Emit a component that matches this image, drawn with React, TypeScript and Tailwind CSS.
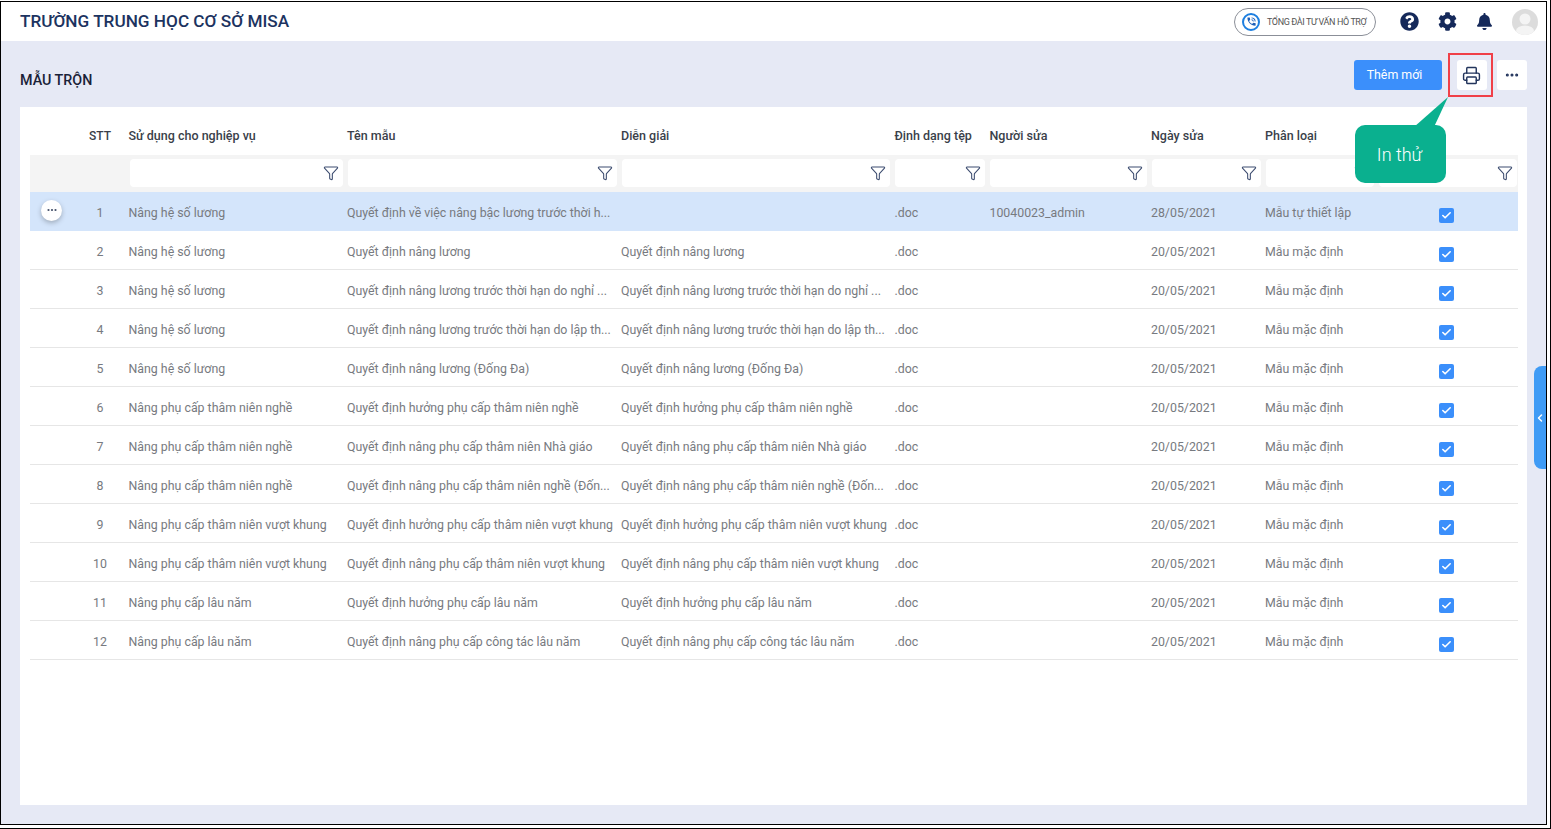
import { Funnel, Printer, Ellipsis, ChevronLeft, Check } from "lucide-react";
import { FaBell, FaCog, FaQuestionCircle } from "react-icons/fa";
import { MdPhoneInTalk } from "react-icons/md";

type Row = {
    stt: number;
    usedFor: string;
    name: string;
    note: string;
    editor?: string;
    date: string;
    kind: string;
};

const L1 = "Nâng hệ số lương";
const L2 = "Nâng phụ cấp thâm niên nghề";
const L3 = "Nâng phụ cấp thâm niên vượt khung";
const L4 = "Nâng phụ cấp lâu năm";
const DATE = "20/05/2021";
const KIND = "Mẫu mặc định";

const rows: Row[] = [
    { stt: 1, usedFor: L1, name: "Quyết định về việc nâng bậc lương trước thời h...", note: "", editor: "10040023_admin", date: "28/05/2021", kind: "Mẫu tự thiết lập" },
    { stt: 2, usedFor: L1, name: "Quyết định nâng lương", note: "Quyết định nâng lương", date: DATE, kind: KIND },
    { stt: 3, usedFor: L1, name: "Quyết định nâng lương trước thời hạn do nghỉ ...", note: "Quyết định nâng lương trước thời hạn do nghỉ ...", date: DATE, kind: KIND },
    { stt: 4, usedFor: L1, name: "Quyết định nâng lương trước thời hạn do lập th...", note: "Quyết định nâng lương trước thời hạn do lập th...", date: DATE, kind: KIND },
    { stt: 5, usedFor: L1, name: "Quyết định nâng lương (Đống Đa)", note: "Quyết định nâng lương (Đống Đa)", date: DATE, kind: KIND },
    { stt: 6, usedFor: L2, name: "Quyết định hưởng phụ cấp thâm niên nghề", note: "Quyết định hưởng phụ cấp thâm niên nghề", date: DATE, kind: KIND },
    { stt: 7, usedFor: L2, name: "Quyết định nâng phụ cấp thâm niên Nhà giáo", note: "Quyết định nâng phụ cấp thâm niên Nhà giáo", date: DATE, kind: KIND },
    { stt: 8, usedFor: L2, name: "Quyết định nâng phụ cấp thâm niên nghề (Đốn...", note: "Quyết định nâng phụ cấp thâm niên nghề (Đốn...", date: DATE, kind: KIND },
    { stt: 9, usedFor: L3, name: "Quyết định hưởng phụ cấp thâm niên vượt khung", note: "Quyết định hưởng phụ cấp thâm niên vượt khung", date: DATE, kind: KIND },
    { stt: 10, usedFor: L3, name: "Quyết định nâng phụ cấp thâm niên vượt khung", note: "Quyết định nâng phụ cấp thâm niên vượt khung", date: DATE, kind: KIND },
    { stt: 11, usedFor: L4, name: "Quyết định hưởng phụ cấp lâu năm", note: "Quyết định hưởng phụ cấp lâu năm", date: DATE, kind: KIND },
    { stt: 12, usedFor: L4, name: "Quyết định nâng phụ cấp công tác lâu năm", note: "Quyết định nâng phụ cấp công tác lâu năm", date: DATE, kind: KIND },
];

const columns = "grid grid-cols-[98.5px_218.5px_274px_273.5px_95px_161.5px_114px_116px_131px]";
const filterWidths = ["w-[213px]", "w-[269px]", "w-[268px]", "w-[90px]", "w-[157px]", "w-[109px]", "w-[108px]", "w-[138px]"];
const cell = "whitespace-nowrap overflow-visible";

const App = () => {
    return (
        <div className="relative box-border flex h-[829px] w-[1551px] flex-col overflow-hidden border-r border-b border-black bg-white pt-px pr-[3px] pb-[3px] font-['Roboto',sans-serif]">
            <div className="flex min-h-0 flex-1 flex-col border border-black">
                {/* top bar */}
                <header className="flex h-[39px] shrink-0 items-center bg-white pl-[19px]">
                    <h1 className="text-[17.2px] font-medium whitespace-nowrap text-[#1c3360]">TRƯỜNG TRUNG HỌC CƠ SỞ MISA</h1>
                    <div className="ml-auto flex h-[28px] w-[142px] items-center rounded-full border border-[#8b8f98] pl-[7px]">
                        <span className="flex h-[18px] w-[18px] items-center justify-center rounded-full border-[2px] border-[#1d7fe0] text-[#1d5fb8]">
                            <MdPhoneInTalk size={11} />
                        </span>
                        <span className="ml-[7px] pt-[2px] text-[9px] tracking-[-0.4px] whitespace-nowrap text-[#555]">TỔNG ĐÀI TƯ VẤN HỖ TRỢ</span>
                    </div>
                    <FaQuestionCircle className="ml-[24px] text-[#15295a]" size={19} />
                    <FaCog className="ml-[19px] text-[#15295a]" size={19} />
                    <FaBell className="ml-[19px] text-[#15295a]" size={17} />
                    <div className="mr-[8px] ml-[19px] flex h-[26px] w-[26px] items-center justify-center overflow-hidden rounded-full bg-[#dcdcdc]">
                        <svg viewBox="0 0 26 26" className="h-[26px] w-[26px]">
                            <circle cx="13" cy="10" r="5.5" fill="#f4f4f4" />
                            <ellipse cx="13" cy="22" rx="9" ry="5.5" fill="#f4f4f4" />
                        </svg>
                    </div>
                </header>

                <main className="flex min-h-0 flex-1 flex-col bg-[#e6e9f5] px-[19px] pb-[19px]">
                    {/* page title and actions */}
                    <div className="flex h-[66px] shrink-0 items-start pt-[19px]">
                        <h2 className="mt-[10px] text-[14.3px] font-medium text-[#1a2238]">MẪU TRỘN</h2>
                        <button className="ml-auto h-[30px] w-[88px] rounded-[3px] bg-[#3b8ffb] pr-[7px] text-[12.4px] text-white">Thêm mới</button>
                        <button className="ml-[15px] flex h-[30px] w-[30px] items-center justify-center rounded-[3px] bg-white pr-[2px] text-[#22345c]">
                            <Printer size={19} strokeWidth={1.8} />
                        </button>
                        <button className="ml-[10px] flex h-[30px] w-[30px] items-center justify-center rounded-[3px] bg-white text-[#22345c]">
                            <Ellipsis size={16} strokeWidth={2.6} />
                        </button>
                    </div>

                    {/* table card */}
                    <section className="min-h-0 flex-1 bg-white pr-[9px] pl-[10px] text-[12.35px]">
                        <div className={`${columns} h-[48px] items-center pt-[10px] text-[12.5px] font-medium text-[#3a3f4a]`}>
                            <div className="flex">
                                <span className="w-[54px]" />
                                <span className="w-[32px] text-center text-[12px]">STT</span>
                            </div>
                            <div className={cell}>Sử dụng cho nghiệp vụ</div>
                            <div className={cell}>Tên mẫu</div>
                            <div className={cell}>Diễn giải</div>
                            <div className={cell}>Định dạng tệp</div>
                            <div className={cell}>Người sửa</div>
                            <div className={cell}>Ngày sửa</div>
                            <div className={cell}>Phân loại</div>
                            <div />
                        </div>

                        <div className="flex h-[37px] items-center gap-[5px] bg-[#f4f4f4] pb-[1px] pl-[100px]">
                            {filterWidths.map((w) => (
                                <div key={w} className={`${w} flex h-[28px] items-center justify-end rounded-[4px] bg-white pr-[4px] text-[#3d4d70]`}>
                                    <Funnel size={16} strokeWidth={1.6} />
                                </div>
                            ))}
                        </div>

                        {rows.map((row, i) => (
                            <div
                                key={row.stt}
                                className={`${columns} h-[39px] items-center text-[#777a80] ${i === 0 ? "bg-[#d4e5fb] pt-[3px]" : "border-b border-[#e6e6e6] pt-[4px]"}`}
                            >
                                <div className="flex items-center">
                                    <span className="flex w-[54px] pl-[11px]">
                                        {i === 0 && (
                                            <span className="-mt-[5px] flex h-[21px] w-[21px] items-center justify-center rounded-full bg-white text-[#44506a] shadow-[0_2px_5px_rgba(0,0,0,0.25)]">
                                                <Ellipsis size={12} strokeWidth={2.4} />
                                            </span>
                                        )}
                                    </span>
                                    <span className="w-[32px] text-center">{row.stt}</span>
                                </div>
                                <div className={cell}>{row.usedFor}</div>
                                <div className={cell}>{row.name}</div>
                                <div className={cell}>{row.note}</div>
                                <div className={cell}>.doc</div>
                                <div className={cell}>{row.editor}</div>
                                <div className={cell}>{row.date}</div>
                                <div className={cell}>{row.kind}</div>
                                <div className="flex justify-center pt-[4px]">
                                    <span className="flex h-[15px] w-[15px] items-center justify-center rounded-[2px] bg-[#3b8ffb] text-white">
                                        <Check size={11} strokeWidth={3.5} />
                                    </span>
                                </div>
                            </div>
                        ))}
                    </section>
                </main>
            </div>

            {/* red highlight around print button */}
            <div className="absolute top-[53px] left-[1448px] h-[44px] w-[45px] border-[2.5px] border-[#f04048]" />

            {/* "In thử" callout */}
            <svg className="absolute top-[96px] left-[1412px] h-[32px] w-[38px]" viewBox="0 0 38 32">
                <polygon points="36,1 2,31 22,31" fill="#0ab08f" />
            </svg>
            <div className="absolute top-[125px] left-[1355px] flex h-[58px] w-[91px] items-center justify-center rounded-[10px] bg-[#0ab08f] pr-[2px] text-[18px] font-light text-white">
                In thử
            </div>

            {/* side collapse tab */}
            <div className="absolute top-[366px] left-[1534px] flex h-[103px] w-[12px] items-center justify-center rounded-l-[8px] bg-[#3f9bf5] text-white">
                <ChevronLeft size={12} strokeWidth={3} />
            </div>
        </div>
    );
};

export default App;
